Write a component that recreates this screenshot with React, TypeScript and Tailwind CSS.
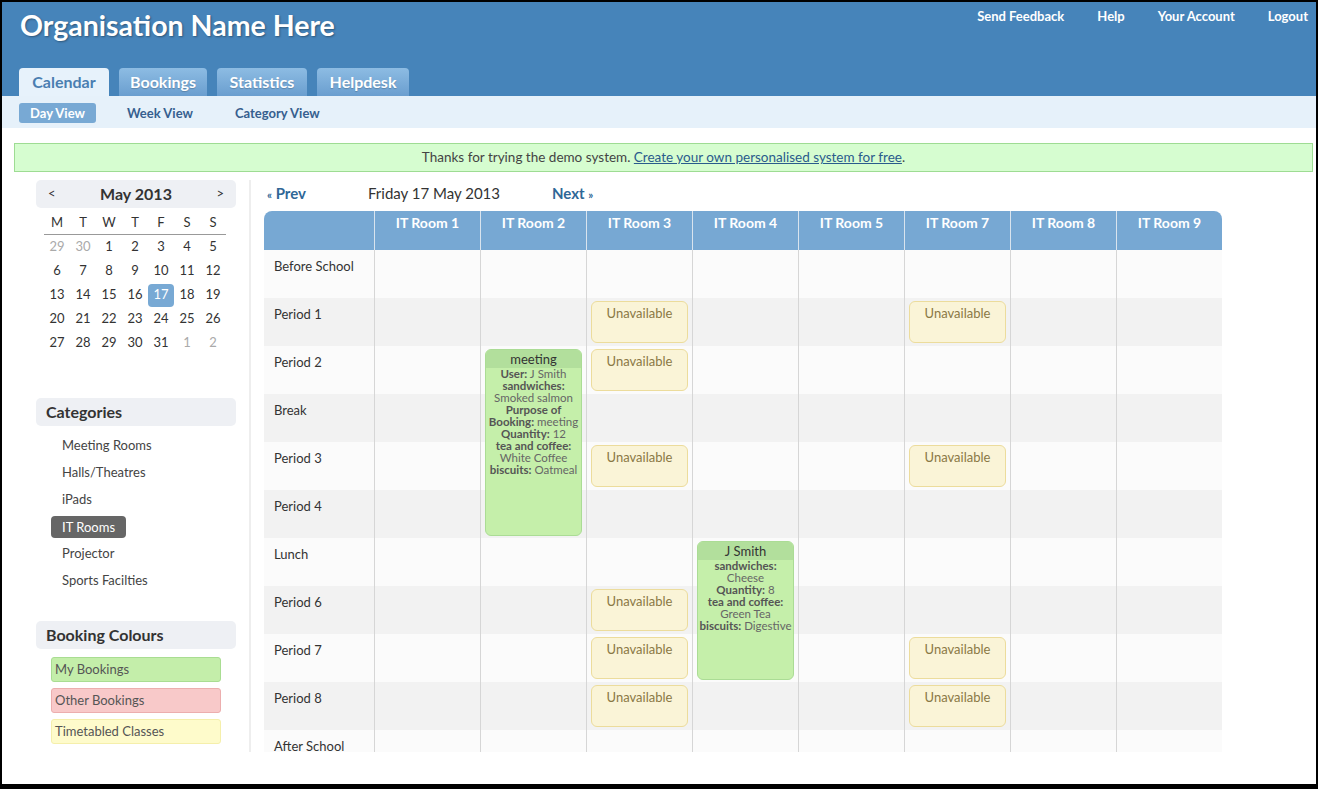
import React from "react";

const rows = [
  "Before School",
  "Period 1",
  "Period 2",
  "Break",
  "Period 3",
  "Period 4",
  "Lunch",
  "Period 6",
  "Period 7",
  "Period 8",
  "After School",
];
const rooms = [1, 2, 3, 4, 5, 7, 8, 9].map((n) => `IT Room ${n}`);

type Line = { label?: string; value?: string };
type Booking = { col: number; row: number; span: number; title: string; lines: Line[] };

const unavailable: { col: number; row: number }[] = [
  ...[1, 2, 4, 7, 8, 9].map((r) => ({ col: 3, row: r })),
  ...[1, 4, 8, 9].map((r) => ({ col: 6, row: r })),
];

const bookings: Booking[] = [
  {
    col: 2,
    row: 2,
    span: 4,
    title: "meeting",
    lines: [
      { label: "User:", value: "J Smith" },
      { label: "sandwiches:" },
      { value: "Smoked salmon" },
      { label: "Purpose of" },
      { label: "Booking:", value: "meeting" },
      { label: "Quantity:", value: "12" },
      { label: "tea and coffee:" },
      { value: "White Coffee" },
      { label: "biscuits:", value: "Oatmeal" },
    ],
  },
  {
    col: 4,
    row: 6,
    span: 3,
    title: "J Smith",
    lines: [
      { label: "sandwiches:" },
      { value: "Cheese" },
      { label: "Quantity:", value: "8" },
      { label: "tea and coffee:" },
      { value: "Green Tea" },
      { label: "biscuits:", value: "Digestive" },
    ],
  },
];

const calRows = [
  [["29", true], ["30", true], ["1"], ["2"], ["3"], ["4"], ["5"]],
  [["6"], ["7"], ["8"], ["9"], ["10"], ["11"], ["12"]],
  [["13"], ["14"], ["15"], ["16"], ["17"], ["18"], ["19"]],
  [["20"], ["21"], ["22"], ["23"], ["24"], ["25"], ["26"]],
  [["27"], ["28"], ["29"], ["30"], ["31"], ["1", true], ["2", true]],
] as [string, boolean?][][];

const categories = ["Meeting Rooms", "Halls/Theatres", "iPads", "IT Rooms", "Projector", "Sports Facilties"];

function SideHeader({ children }: { children: React.ReactNode }) {
  return (
    <div className="h-[28px] rounded-[5px] bg-[#eef0f4] pl-[10px] text-[16px] font-bold leading-[28px] text-[#333]">
      {children}
    </div>
  );
}

export default function App() {
  return (
    <div className="h-[789px] w-[1318px] bg-black pb-[5px] pl-[2px] pr-[2px] pt-[2px] font-['Lato',sans-serif]">
      <div className="flex h-full flex-col overflow-hidden bg-white">
        {/* Header */}
        <div className="flex h-[94px] flex-col justify-between bg-[#4684ba]">
          <div className="flex items-start justify-between">
            <div className="pl-[18px] pt-[8px] text-[28.5px] font-bold leading-[30px] text-white [text-shadow:1px_1px_2px_rgba(0,0,0,0.35)]">
              Organisation Name Here
            </div>
            <div className="flex gap-[33px] pr-[8px] pt-[6px] text-[13px] font-bold leading-[16px] text-white">
              <span>Send Feedback</span>
              <span>Help</span>
              <span>Your Account</span>
              <span>Logout</span>
            </div>
          </div>
          <div className="flex gap-[10px] pl-[17px]">
            <div className="flex h-[28px] w-[90px] items-center justify-center rounded-t-[4px] bg-[#e7f2fb] text-[16px] font-bold text-[#4a7eb1]">
              Calendar
            </div>
            {[
              ["Bookings", "w-[88px]"],
              ["Statistics", "w-[90px]"],
              ["Helpdesk", "w-[92px]"],
            ].map(([t, w]) => (
              <div
                key={t}
                className={`flex h-[28px] ${w} items-center justify-center rounded-t-[4px] bg-gradient-to-b from-[#8dbce3] to-[#6a9ecf] text-[16px] font-bold text-white [text-shadow:0_1px_1px_rgba(0,0,0,0.2)]`}
              >
                {t}
              </div>
            ))}
          </div>
        </div>

        {/* Sub nav */}
        <div className="flex h-[32px] items-center gap-5 bg-[#e6f1fa] pl-[17px] pt-[2px] text-[13px] font-bold text-[#365f8f]">
          <span className="rounded-[3px] bg-[#78a9d4] px-[11px] leading-[20px] text-white">Day View</span>
          <span className="px-[11px] leading-[20px]">Week View</span>
          <span className="px-[11px] leading-[20px]">Category View</span>
        </div>

        {/* Banner */}
        <div className="ml-[12px] mr-[3px] mt-[15px] border border-[#9edc93] bg-[#d6fdd0] text-center text-[13.5px] leading-[27px] text-[#444]">
          Thanks for trying the demo system.{" "}
          <span className="text-[#2a5b8c] underline">Create your own personalised system for free</span>.
        </div>

        {/* Content */}
        <div className="mt-[8px] flex h-[572px] overflow-hidden">
          {/* Sidebar */}
          <div className="w-[249px] shrink-0 border-r-2 border-[#eeeeee] pl-[34px] pr-[13px]">
            {/* Mini calendar */}
            <div className="flex h-[28px] items-center justify-between rounded-[5px] bg-[#eef0f4] px-[12px] text-[#333]">
              <span className="text-[13px]">&lt;</span>
              <span className="text-[16px] font-bold">May 2013</span>
              <span className="text-[13px]">&gt;</span>
            </div>
            <div className="ml-[8px] w-[182px]">
              <div className="grid h-[27px] grid-cols-7 items-center border-b border-[#999] pt-[3px] text-center text-[13px] text-[#333]">
                {["M", "T", "W", "T", "F", "S", "S"].map((d, i) => (
                  <span key={i}>{d}</span>
                ))}
              </div>
              {calRows.map((r, ri) => (
                <div key={ri} className="grid h-[24px] grid-cols-7 items-center text-center text-[13px]">
                  {r.map(([d, muted], ci) =>
                    d === "17" && !muted ? (
                      <span key={ci} className="flex h-[23px] items-center justify-center rounded-[4px] bg-[#78a9d4] text-white">
                        {d}
                      </span>
                    ) : (
                      <span key={ci} className={muted ? "text-[#aaaaaa]" : "text-[#333]"}>
                        {d}
                      </span>
                    )
                  )}
                </div>
              ))}
            </div>

            {/* Categories */}
            <div className="mt-[43px]">
              <SideHeader>Categories</SideHeader>
              <div className="mt-[6px] flex flex-col pl-[15px] text-[13px] text-[#444]">
                {categories.map((c) => (
                  <div key={c} className="flex h-[27px] items-center">
                    {c === "IT Rooms" ? (
                      <span className="rounded-[4px] bg-[#666] px-[11px] leading-[22px] text-white">{c}</span>
                    ) : (
                      <span className="px-[11px]">{c}</span>
                    )}
                  </div>
                ))}
              </div>
            </div>

            {/* Booking colours */}
            <div className="mt-[27px]">
              <SideHeader>Booking Colours</SideHeader>
              <div className="mt-[8px] flex w-[185px] flex-col gap-[6px] pl-[15px] text-[13px] text-[#555]">
                <div className="h-[25px] rounded-[3px] border border-[#a9dd92] bg-[#c4eeaa] pl-[3px] leading-[23px]">My Bookings</div>
                <div className="h-[25px] rounded-[3px] border border-[#ecaeae] bg-[#f8c9c9] pl-[3px] leading-[23px]">Other Bookings</div>
                <div className="h-[25px] rounded-[3px] border border-[#f5efab] bg-[#fefbcb] pl-[3px] leading-[23px]">Timetabled Classes</div>
              </div>
            </div>
          </div>

          {/* Main */}
          <div className="pl-[13px]">
            <div className="flex h-[26px] items-center pl-[3px] text-[15px]">
              <span className="w-[101px] font-bold text-[#2f6797]">
                <span className="text-[11px]">«</span> Prev
              </span>
              <span className="w-[184px] text-[#333]">Friday 17 May 2013</span>
              <span className="font-bold text-[#2f6797]">
                Next <span className="text-[11px]">»</span>
              </span>
            </div>

            <div className="mt-[5px] grid grid-cols-[110px_repeat(8,106px)] grid-rows-[39px_repeat(11,48px)]">
              <div className="rounded-tl-[8px] bg-[#77a8d3]" style={{ gridColumn: 1, gridRow: 1 }} />
              {rooms.map((r, i) => (
                <div
                  key={r}
                  className={`border-l border-[#d9e4ee] bg-[#77a8d3] pt-[2px] text-center text-[14px] font-bold leading-[20px] text-white ${
                    i === rooms.length - 1 ? "rounded-tr-[8px]" : ""
                  }`}
                  style={{ gridColumn: i + 2, gridRow: 1 }}
                >
                  {r}
                </div>
              ))}
              {rows.map((label, ri) => {
                const bg = ri % 2 === 0 ? "bg-[#fbfbfb]" : "bg-[#f2f2f2]";
                return (
                  <React.Fragment key={label}>
                    <div
                      className={`${bg} pl-[10px] pt-[7px] text-[13px] leading-[18px] text-[#333]`}
                      style={{ gridColumn: 1, gridRow: ri + 2 }}
                    >
                      {label}
                    </div>
                    {rooms.map((r, ci) => (
                      <div
                        key={r}
                        className={`${bg} border-l border-[#d6d6d6]`}
                        style={{ gridColumn: ci + 2, gridRow: ri + 2 }}
                      />
                    ))}
                  </React.Fragment>
                );
              })}
              {unavailable.map((u, i) => (
                <div
                  key={`u${i}`}
                  className="mb-[3px] ml-[5px] mr-[4px] mt-[3px] rounded-[6px] border border-[#ecdc9c] bg-[#faf4d7] pt-[2px] text-center text-[13px] leading-[18px] text-[#8a7845]"
                  style={{ gridColumn: u.col + 1, gridRow: u.row + 2 }}
                >
                  Unavailable
                </div>
              ))}
              {bookings.map((b) => (
                <div
                  key={b.title}
                  className="mb-[2px] ml-[5px] mr-[4px] mt-[3px] overflow-hidden rounded-[6px] border border-[#abdc95] bg-[#c5efaa] text-center"
                  style={{ gridColumn: b.col + 1, gridRow: `${b.row + 2} / span ${b.span}` }}
                >
                  <div className="h-[18px] bg-[#b2df9c] text-[13px] leading-[18px] text-[#333]">{b.title}</div>
                  <div className="text-[11.5px] leading-[12px] text-[#666]">
                    {b.lines.map((l, i) => (
                      <div key={i} className="whitespace-nowrap">
                        {l.label && <span className="font-bold text-[#555]">{l.label}</span>}
                        {l.label && l.value && " "}
                        {l.value && <span>{l.value}</span>}
                      </div>
                    ))}
                  </div>
                </div>
              ))}
            </div>
          </div>
        </div>
      </div>
    </div>
  );
}
